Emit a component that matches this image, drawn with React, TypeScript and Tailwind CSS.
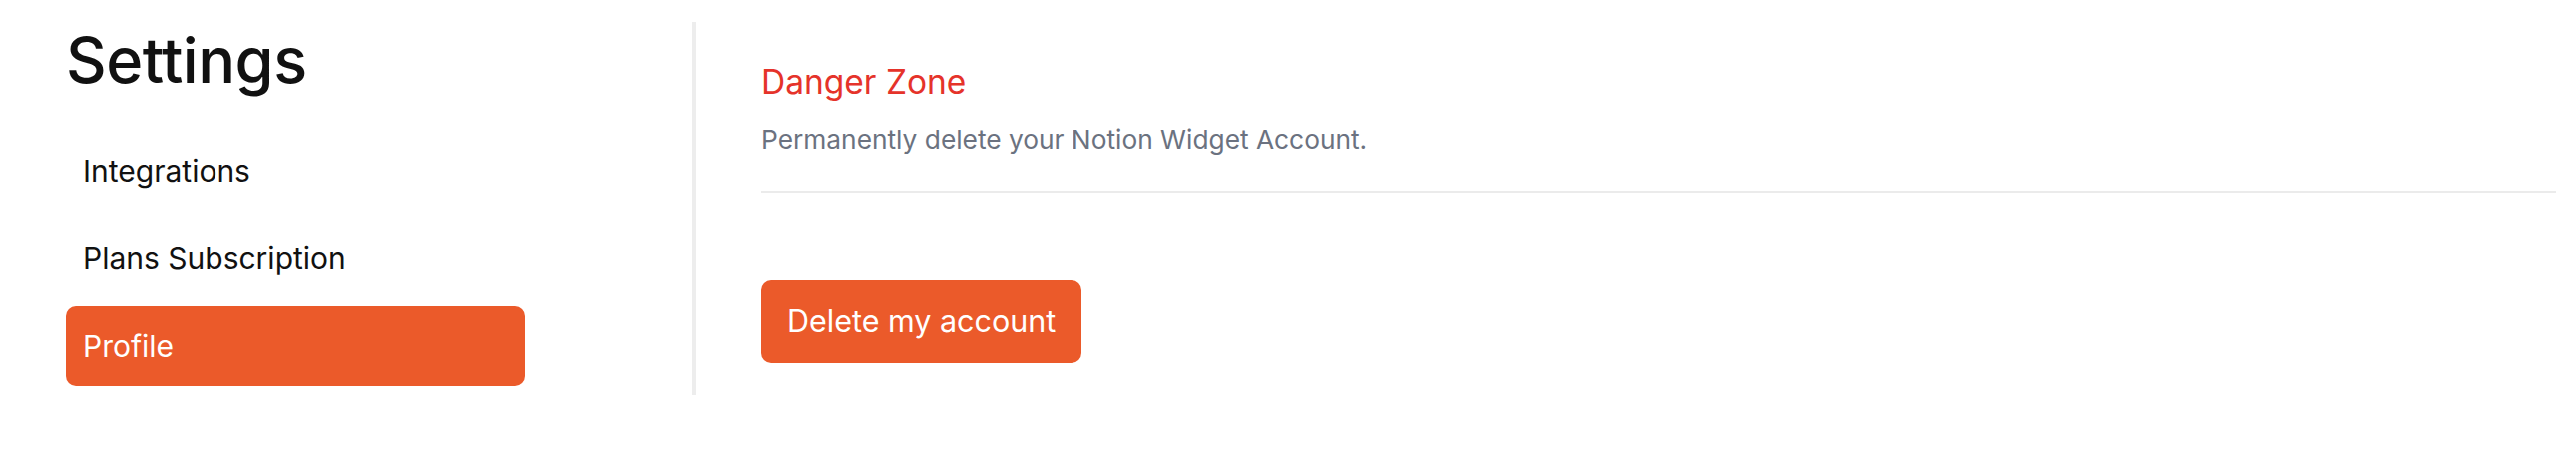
import { useState } from 'react';

type Tab = 'integrations' | 'plans' | 'profile';

const tabs: { id: Tab; label: string }[] = [
    { id: 'integrations', label: 'Integrations' },
    { id: 'plans', label: 'Plans Subscription' },
    { id: 'profile', label: 'Profile' },
];

export default function App() {
    const [active, setActive] = useState<Tab>('profile');

    return (
        <div
            className="w-full min-h-[470px] bg-white flex pt-[22px] text-[#111111]"
            style={{ fontFamily: 'Inter, "Noto Sans", sans-serif' }}
        >
            <aside className="w-[698px] shrink-0 h-[374px] border-r-4 border-[#ededed] pl-[66px]">
                <h1 className="mt-[5px] text-[63px] leading-[66px] font-medium tracking-[-0.5px]">
                    Settings
                </h1>
                <nav className="mt-[38px] w-[460px] flex flex-col gap-[8px]">
                    {tabs.map((tab) => (
                        <button
                            key={tab.id}
                            onClick={() => setActive(tab.id)}
                            className={`h-[80px] flex items-center pl-[17px] rounded-[10px] text-[30px] leading-none text-left ${
                                active === tab.id ? 'bg-[#eb5a2a] text-white' : 'text-[#111111]'
                            }`}
                        >
                            {tab.label}
                        </button>
                    ))}
                </nav>
            </aside>

            <main className="flex-1 pl-[65px] pr-[20px]">
                <h2 className="mt-[44px] text-[33.5px] leading-none text-[#e5332a]">Danger Zone</h2>
                <p className="mt-[27px] text-[26.3px] leading-none text-[#6b7280]">
                    Permanently delete your Notion Widget Account.
                </p>
                <div className="mt-[38px] h-[2px] bg-[#ebebeb]" />
                <button className="mt-[88px] h-[83px] px-[26px] rounded-[10px] bg-[#eb5a2a] text-white text-[30.5px] leading-none">
                    Delete my account
                </button>
            </main>
        </div>
    );
}
